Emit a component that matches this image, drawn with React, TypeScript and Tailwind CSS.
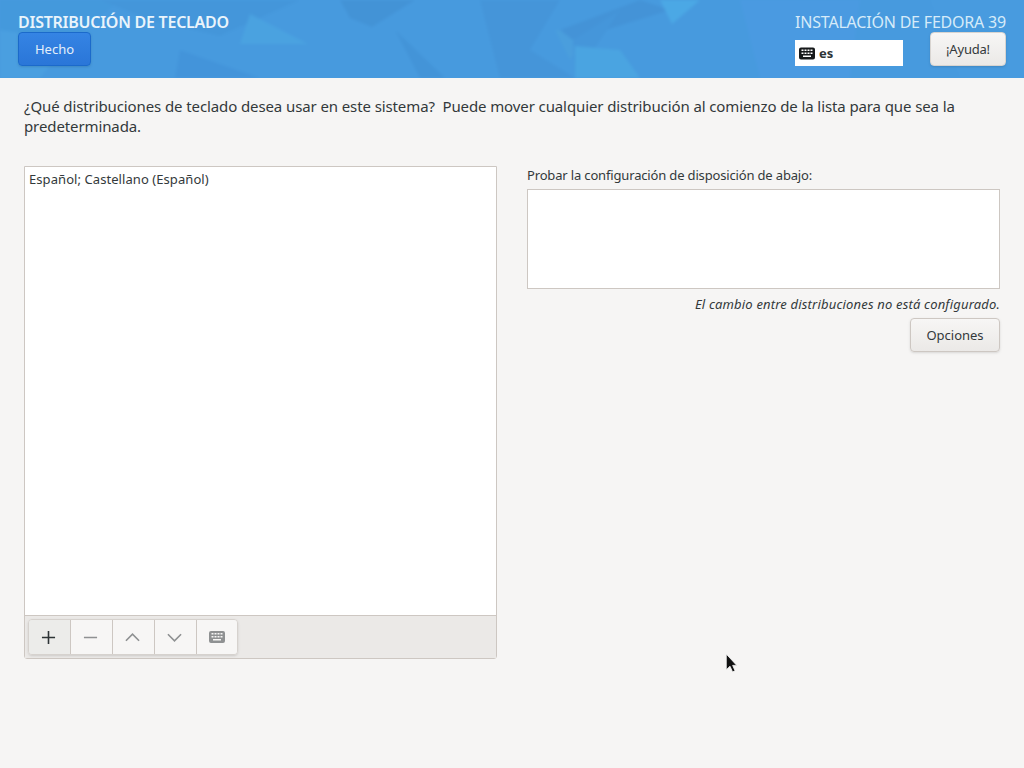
import React from 'react';

const font = "font-['Noto_Sans',sans-serif]";

const HeaderArt = () => (
  <svg className="absolute inset-0 h-full w-full" viewBox="0 0 1024 78" preserveAspectRatio="none">
    <g className="blur-[1.5px]">
      <rect x="-20" y="-20" width="1064" height="118" fill="#479ade" />
      <polygon points="0,0 120,0 70,40 0,30" fill="#4499dc" />
      <polygon points="0,30 70,40 40,78 0,78" fill="#4a9fe0" />
      <polygon points="100,0 300,0 220,36 150,20" fill="#4496da" />
      <polygon points="180,50 260,78 175,78" fill="#4394da" />
      <polygon points="250,14 308,44 240,44" fill="#4aa2e0" />
      <polygon points="340,0 415,0 372,27 350,18" fill="#4393d6" />
      <polygon points="395,30 445,78 420,78" fill="#4394d8" />
      <polygon points="480,0 560,0 530,50 575,78 500,78" fill="#4595d9" />
      <polygon points="555,30 590,30 570,60" fill="#4a9edd" />
      <polygon points="560,30 640,0 670,10 573,40" fill="#4493d7" />
      <polygon points="573,40 620,10 575,78" fill="#4596da" />
      <polygon points="575,46 620,50 640,78 575,78" fill="#4aa4e1" />
      <polygon points="660,0 700,0 672,24" fill="#4ba8e5" />
      <polygon points="740,0 860,0 850,78 760,78" fill="#4a9ae1" />
      <polygon points="930,0 1024,0 1024,78 960,78" fill="#489bdf" />
    </g>
  </svg>
);

const KeyboardGlyph = ({ className }: { className: string }) => (
  <svg viewBox="0 0 16 12" className={className}>
    <path
      fillRule="evenodd"
      fill="currentColor"
      d="M2 0h12a2 2 0 0 1 2 2v8a2 2 0 0 1-2 2H2a2 2 0 0 1-2-2V2a2 2 0 0 1 2-2zM2.5 2v1.5h2V2zm3 0v1.5h2V2zm3 0v1.5h2V2zm3 0v1.5h2V2zM2.5 5v1.5h2V5zm3 0v1.5h2V5zm3 0v1.5h2V5zm3 0v1.5h2V5zM4 8v1.5h8V8z"
    />
  </svg>
);

const ToolButton = ({ children, active }: { children: React.ReactNode; active?: boolean }) => (
  <div
    className={`flex h-full w-[42px] shrink-0 items-center justify-center border-r border-[#cdc7c2] pr-[2px] last:border-r-0 ${
      active ? 'bg-[#ececea]' : 'bg-[#f7f6f5]'
    }`}
  >
    {children}
  </div>
);

const App = () => {
  return (
    <div className={`${font} flex h-[768px] w-[1024px] flex-col overflow-hidden bg-[#f6f5f4] text-[#33393b] relative`}>
      <header className="relative h-[78px] shrink-0 overflow-hidden">
        <HeaderArt />
        <div className="relative flex justify-between px-[18px]">
          <div className="flex flex-col items-start pt-[12px]">
            <h1 className="h-[20px] text-[16px] leading-[20px] font-semibold tracking-[-0.25px] text-[#eaf4fb]">DISTRIBUCIÓN DE TECLADO</h1>
            <button className="flex h-[34px] w-[73px] items-center justify-center rounded-[4px] border border-[#1b6acb] bg-gradient-to-b from-[#3584e4] to-[#2a76d8] pt-[1px] text-[13px] text-[#e4effa] shadow-sm">
              Hecho
            </button>
          </div>
          <div className="flex w-[211px] flex-col items-end pt-[12px]">
            <div className="h-[20px] text-[16px] leading-[20px] tracking-[-0.2px] whitespace-nowrap text-[#d6ebf9]">INSTALACIÓN DE FEDORA 39</div>
            <div className="flex w-full items-start justify-between">
              <div className="mt-[8px] flex h-[26px] w-[108px] items-center gap-[4px] bg-white pl-[4px] pt-[1px] text-[13px] font-bold text-[#2e3436]">
                <KeyboardGlyph className="h-[13px] w-[16px] text-[#16191a]" />
                <span>es</span>
              </div>
              <button className="flex h-[34px] w-[76px] items-center justify-center rounded-[4px] border border-[#d8d4d0] bg-gradient-to-b from-[#f7f6f5] to-[#ebe9e7] pt-[1px] text-[13px] tracking-[-0.2px] text-[#33393b] shadow-sm">
                ¡Ayuda!
              </button>
            </div>
          </div>
        </div>
      </header>

      <main className="flex flex-1 flex-col px-6 pt-[18px]">
        <p className="w-[960px] text-[15px] leading-[20px] tracking-[-0.105px] whitespace-pre-wrap">
          ¿Qué distribuciones de teclado desea usar en este sistema?  Puede mover cualquier distribución al comienzo de la lista para que sea la predeterminada.
        </p>

        <div className="mt-[30px] flex gap-[30px]">
          <section className="flex h-[493px] w-[473px] flex-col rounded-b-[3px] border border-[#cdc7c2] bg-white">
            <div className="flex-1 px-[4px] pt-[3px] text-[13px] leading-[18px] tracking-[0.07px]">Español; Castellano (Español)</div>
            <div className="flex h-[43px] items-center border-t border-[#cdc7c2] bg-[#ebe9e7] pl-[3px]">
              <div className="flex h-[36px] w-[210px] overflow-hidden rounded-[4px] border border-[#d6d2ce] shadow-sm">
                <ToolButton active>
                  <svg viewBox="0 0 16 16" className="h-[15px] w-[15px]">
                    <path d="M8 1v14M1 8h14" stroke="#2e3436" strokeWidth="1.7" fill="none" />
                  </svg>
                </ToolButton>
                <ToolButton>
                  <svg viewBox="0 0 16 16" className="h-[15px] w-[15px]">
                    <path d="M1 8h14" stroke="#8f9192" strokeWidth="1.7" fill="none" />
                  </svg>
                </ToolButton>
                <ToolButton>
                  <svg viewBox="0 0 16 16" className="h-[15px] w-[15px]">
                    <path d="M1 11.5 8 4.5l7 7" stroke="#8f9192" strokeWidth="1.7" fill="none" />
                  </svg>
                </ToolButton>
                <ToolButton>
                  <svg viewBox="0 0 16 16" className="h-[15px] w-[15px]">
                    <path d="M1 4.5 8 11.5l7-7" stroke="#8f9192" strokeWidth="1.7" fill="none" />
                  </svg>
                </ToolButton>
                <ToolButton>
                  <KeyboardGlyph className="h-[12px] w-[16px] text-[#8f9192]" />
                </ToolButton>
              </div>
            </div>
          </section>

          <section className="flex w-[473px] flex-col">
            <label className="text-[13px] leading-[18px] tracking-[-0.16px]">Probar la configuración de disposición de abajo:</label>
            <div className="mt-[5px] h-[100px] border border-[#cdc7c2] bg-white" />
            <p className="mt-[6px] text-right text-[13px] leading-[18px] tracking-[0.18px] italic">El cambio entre distribuciones no está configurado.</p>
            <div className="mt-[5px] flex justify-end">
              <button className="flex h-[34px] w-[90px] items-center justify-center rounded-[4px] border border-[#cdc7c2] bg-gradient-to-b from-[#f7f6f5] to-[#ebe9e7] pt-[1px] text-[13px] shadow-sm">
                Opciones
              </button>
            </div>
          </section>
        </div>
      </main>

      <svg viewBox="0 0 12 20" className="absolute left-[725px] top-[653px] h-[21px] w-[13px]">
        <path d="M1 1v15l3.6-3.4L7 18l2.4-1-2.3-5.2H11z" fill="#111" stroke="#f4f4f4" strokeWidth="0.8" />
      </svg>
    </div>
  );
};

export default App;
